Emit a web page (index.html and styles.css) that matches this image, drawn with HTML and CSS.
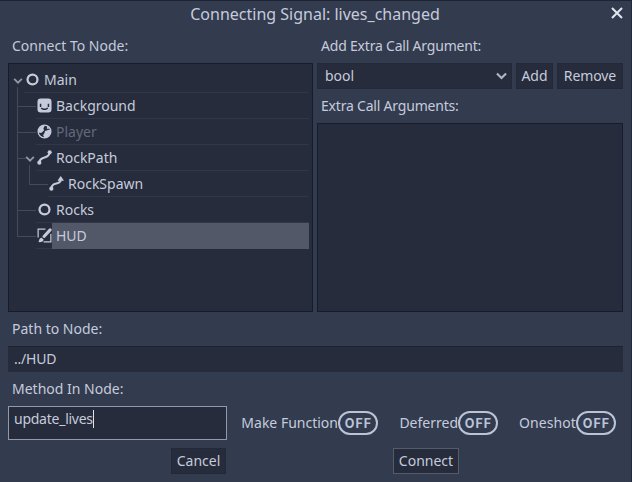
FILE: index.html
```html
<!DOCTYPE html>
<html lang="en">
<head>
<meta charset="utf-8">
<title>Connecting Signal</title>
<link rel="stylesheet" href="styles.css">
</head>
<body>
<svg class="defs" aria-hidden="true">
  <symbol id="node" viewBox="0 0 16 16"><circle cx="8" cy="8" r="5.3" fill="none" stroke="currentColor" stroke-width="2.4"/></symbol>
  <symbol id="sprite" viewBox="0 0 16 16"><path fill="currentColor" fill-rule="evenodd" d="M4 .5h8a3.500 3.500 0 0 1 3.500 3.500v8a3.500 3.500 0 0 1-3.500 3.500H4A3.500 3.500 0 0 1 .5 12V4A3.500 3.500 0 0 1 4 .5zM3 6v3.500h1.600V6zM11.400 6v3.500H13V6zM4 10.800c1.300 2.600 6.700 2.600 8 0l-1.200-.7c-.9 1.500-4.700 1.500-5.600 0z"/></symbol>
  <symbol id="body" viewBox="0 0 16 16"><circle cx="8" cy="8" r="6.800" fill="none" stroke="currentColor" stroke-width="1.400"/><path fill="currentColor" d="M1.500 9C1 5 4 1.200 8.500 1.500L6.800 4.500 7.500 7 4.500 9.500zM8.500 7.500 14.500 5.500C15.200 10 12.500 14.500 8 14.800L6.500 12 8 9.500zM10.500 1.800 13.500 4.500 11 5.500z"/></symbol>
  <symbol id="path" viewBox="0 0 16 16"><path d="M2.500 13.500C2.500 5.500 13.500 10.500 13.500 2.500" fill="none" stroke="currentColor" stroke-width="2.200"/><circle cx="2.500" cy="13.500" r="2.200" fill="currentColor"/><circle cx="13.500" cy="2.500" r="2.200" fill="currentColor"/></symbol>
  <symbol id="follow" viewBox="0 0 16 16"><path d="M2.500 13.500C2.500 5.500 12.500 10.500 12.500 4" fill="none" stroke="currentColor" stroke-width="2.200"/><circle cx="2.500" cy="13.500" r="2.200" fill="currentColor"/><path d="M12.500 0 16 5H9z" fill="currentColor"/></symbol>
  <symbol id="canvas" viewBox="0 0 16 16"><path d="M9 1.200H1.200V10M14.800 6v8.800H7" fill="none" stroke="currentColor" stroke-width="1.300"/><path d="M7.500 9 14 2" stroke="currentColor" stroke-width="3.200" stroke-linecap="round"/><path d="M1.500 15c.8-1 .5-4.500 3.500-4.700L7 12.200c0 2.500-3 3.300-5.500 2.800z" fill="currentColor"/></symbol>
  <symbol id="chevron" viewBox="0 0 10 10"><path d="M1.500 3.500 5 7 8.500 3.500" fill="none" stroke="currentColor" stroke-width="1.600"/></symbol>
</svg>
<div class="dialog">
  <header class="titlebar">
    <h1>Connecting Signal: lives_changed</h1>
    <svg class="close" viewBox="0 0 12 12"><path d="M1 1 11 11M11 1 1 11" stroke="currentColor" stroke-width="2.100"/></svg>
  </header>
  <main class="columns">
    <section class="column">
      <div class="label">Connect To Node:</div>
      <div class="panel tree">
        <div class="row"><svg class="fold"><use href="#chevron"/></svg><div class="cell"><svg class="icon"><use href="#node"/></svg><span>Main</span></div></div>
        <ul class="children">
          <li><div class="row"><i class="fold"></i><div class="cell"><svg class="icon"><use href="#sprite"/></svg><span>Background</span></div></div></li>
          <li><div class="row"><i class="fold"></i><div class="cell"><svg class="icon"><use href="#body"/></svg><span class="disabled">Player</span></div></div></li>
          <li class="open"><div class="row"><svg class="fold"><use href="#chevron"/></svg><div class="cell"><svg class="icon"><use href="#path"/></svg><span>RockPath</span></div></div>
            <ul class="children">
              <li><div class="row"><i class="fold"></i><div class="cell"><svg class="icon"><use href="#follow"/></svg><span>RockSpawn</span></div></div></li>
            </ul>
          </li>
          <li><div class="row"><i class="fold"></i><div class="cell"><svg class="icon"><use href="#node"/></svg><span>Rocks</span></div></div></li>
          <li><div class="row"><i class="fold"></i><div class="cell"><svg class="icon"><use href="#canvas"/></svg><span class="selected">HUD</span></div></div></li>
        </ul>
      </div>
    </section>
    <section class="column">
      <div class="label tight">Add Extra Call Argument:</div>
      <div class="argument">
        <div class="button select"><span>bool</span><svg class="caret"><use href="#chevron"/></svg></div>
        <div class="button add">Add</div>
        <div class="button remove">Remove</div>
      </div>
      <div class="label tight">Extra Call Arguments:</div>
      <div class="panel list"></div>
    </section>
  </main>
  <div class="label">Path to Node:</div>
  <div class="path-field">../HUD</div>
  <div class="label">Method In Node:</div>
  <div class="method">
    <div class="method-field"><span>update_lives</span><i class="cursor"></i></div>
    <div class="option make"><span>Make Function</span><b class="toggle">OFF</b></div>
    <div class="option deferred"><span>Deferred</span><b class="toggle">OFF</b></div>
    <div class="option oneshot"><span>Oneshot</span><b class="toggle">OFF</b></div>
  </div>
  <footer class="actions">
    <div class="button cancel">Cancel</div>
    <div class="button connect">Connect</div>
  </footer>
</div>
</body>
</html>
```
FILE: styles.css
```css
* { box-sizing: border-box; }
body {
  margin: 0;
  background: #333b4f;
  color: #c5cbdc;
  font: 14px/26px "Noto Sans", sans-serif;
  overflow: hidden;
}
svg { flex: none; }
.defs { display: none; }
.dialog {
  display: flex;
  flex-direction: column;
  width: 632px;
  height: 482px;
  padding: 0 8px 8px;
  border-top: 1px solid #1d2433;
  border-right: 1px solid #202a3b;
}
.titlebar { position: relative; height: 28px; text-align: center; }
h1 { margin: 0; padding-right: 1px; font-size: 16px; font-weight: 400; line-height: 27px; }
.close { position: absolute; right: 0; top: 6px; width: 12px; height: 12px; color: #e0e4ee; }
.columns { display: grid; grid-template-columns: 305px 306px; gap: 4px; height: 283px; }
.column { display: flex; flex-direction: column; }
.label { height: 34px; line-height: 34px; padding-left: 4px; white-space: nowrap; }
.tight { letter-spacing: -0.2px; }
.panel { flex: 1; background: #262c3b; border: 1px solid #141c2d; }
.tree { padding: 3px; }
.row { display: flex; height: 26px; }
.fold { width: 12px; height: 11px; margin-top: 8px; color: #9299aa; flex: none; }
.cell { display: flex; flex: 1; border-bottom: 1px solid #303748; }
.cell span { flex: 1; height: 26px; padding-left: 4px; }
.icon { width: 15px; height: 15px; margin: 5px 0.3px 0 0.7px; }
.children { list-style: none; margin: 0; padding: 0 0 0 12px; }
.children li { position: relative; }
.children li::before {
  content: "";
  position: absolute;
  left: -7px;
  top: -13px;
  width: 18px;
  height: 26px;
  border-left: 1px solid #434a5a;
  border-bottom: 1px solid #434a5a;
}
.children li:first-child::before { top: -6px; height: 19px; }
.children .open::before { width: 8px; }
.children .open + li::before { top: -39px; height: 52px; }
.disabled { color: #626979; }
.cell .selected { background: #535868; }
.argument { display: flex; gap: 4px; height: 26px; }
.button { height: 26px; line-height: 26px; background: #262c3b; text-align: center; box-shadow: inset 0 0 0 1px #222939; }
.select { display: flex; justify-content: space-between; width: 195px; padding: 0 4px 0 8px; }
.caret { width: 13px; height: 13px; margin-top: 6px; color: #aeb7ca; }
.add { width: 37px; }
.remove { flex: 1; letter-spacing: -0.1px; }
.path-field { height: 26px; padding-left: 6px; background: #262c3b; border-top: 1px solid #1b2333; line-height: 24px; letter-spacing: -0.2px; }
.method { display: flex; height: 34px; }
.method-field { display: flex; width: 219px; padding: 0 5px; border: 1px solid #9299ab; background: #262c3b; line-height: 24px; letter-spacing: -0.25px; }
.cursor { width: 1px; height: 18px; margin-top: 3px; background: #dde2ee; }
.option { display: flex; align-items: center; white-space: nowrap; justify-content: flex-end; }
.make { width: 151px; }
.deferred { width: 120px; }
.oneshot { width: 118px; }
.oneshot span { letter-spacing: 0.1px; }
.toggle { width: 40px; height: 24px; border: 2px solid #bac4d8; border-radius: 12px; color: #bac4d8; font: 700 12.5px/22px Inter, sans-serif; letter-spacing: 1px; text-align: center; padding-left: 1px; }
.actions { display: flex; justify-content: space-between; margin-top: 8px; padding: 0 164px 0 163px; }
.cancel { width: 55px; }
.connect { width: 66px; box-shadow: inset 0 0 0 1px #555b6b; }
```
